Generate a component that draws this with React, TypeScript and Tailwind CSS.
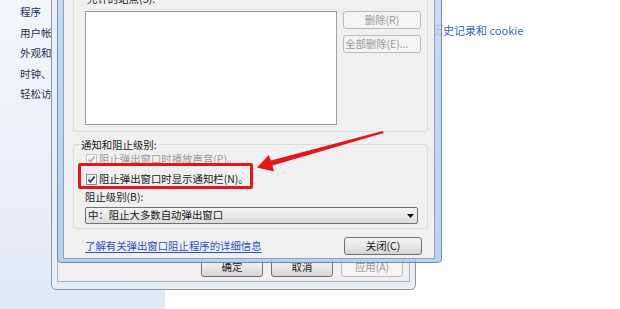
import React from "react";

// Win7 style push button
function WinButton({
  children,
  disabled,
  className = "",
}: {
  children: React.ReactNode;
  disabled?: boolean;
  className?: string;
}) {
  return (
    <div
      className={
        "flex items-center justify-center rounded-[3px] border text-[10.4px] leading-none " +
        (disabled
          ? "border-[#b8bcc0] bg-[#f4f4f4] text-[#9a9a9a] "
          : "border-[#707070] bg-linear-to-b from-[#f3f3f3] via-[#e8e8e8] to-[#d4d4d4] text-[#1a1a1a] ") +
        className
      }
    >
      {children}
    </div>
  );
}

function CheckBox({ disabled }: { disabled?: boolean }) {
  return (
    <svg width="11" height="11" viewBox="0 0 11 11" className="shrink-0">
      <defs>
        <linearGradient id={disabled ? "cbd" : "cbn"} x1="0" y1="0" x2="1" y2="1">
          <stop offset="0" stopColor={disabled ? "#f0f0f0" : "#dcdcdc"} />
          <stop offset="1" stopColor={disabled ? "#fafafa" : "#ffffff"} />
        </linearGradient>
      </defs>
      <rect x="0.5" y="0.5" width="10" height="10" fill="#fff" stroke={disabled ? "#c4c4c4" : "#8e8f8f"} />
      <rect x="1.5" y="1.5" width="8" height="8" fill={`url(#${disabled ? "cbd" : "cbn"})`} />
      <path
        d="M2.4 5.6 L4.4 7.9 L8.6 2.6"
        stroke={disabled ? "#b5b5b5" : "#1e3f9a"}
        strokeWidth="1.7"
        fill="none"
      />
    </svg>
  );
}

const sidebarItems = ["程序", "用户帐户", "外观和个性化", "时钟、语言和区域", "轻松访问"];

export default function App() {
  return (
    <div className="relative flex h-[309px] w-[620px] overflow-hidden bg-white font-['Noto_Sans_CJK_SC','Noto_Sans',sans-serif] text-[#1a1a1a]">
      {/* Control panel behind */}
      <div className="flex h-full w-[165px] shrink-0 flex-col bg-linear-to-b from-[#f2f6fc] via-[#eaf1fa] to-[#dfe9f7] pl-[20px] pt-[2px]">
        {sidebarItems.map((t) => (
          <div key={t} className="whitespace-nowrap text-[10.5px] leading-[20.5px] text-[#1d2f56]">
            {t}
          </div>
        ))}
      </div>
      <div className="flex-1 pl-[267px] pt-[22px]">
        <div className="whitespace-nowrap text-[11px] leading-[16px] text-[#3a62d0]">历史记录和 cookie</div>
      </div>

      {/* Internet Options (parent window, inactive) */}
      <div className="absolute left-[51px] top-[-30px] flex h-[320px] w-[365px] flex-col rounded-b-[5px] border border-[#8d969f] bg-[#e9eff6] px-[5px] pb-[7px]">
        <div className="flex flex-1 flex-col justify-end border border-[#a9b3bd] bg-[#f0f0f0]">
          <div className="flex justify-end gap-[8px] pb-[4px] pr-[6px]">
            <WinButton className="h-[19px] w-[62px]">确定</WinButton>
            <WinButton className="h-[19px] w-[62px]">取消</WinButton>
            <WinButton disabled className="h-[19px] w-[62px]">
              应用(A)
            </WinButton>
          </div>
        </div>
      </div>

      {/* Pop-up blocker settings (front dialog, glass frame) */}
      <div className="absolute left-[57px] top-[-40px] flex h-[303px] w-[385px] flex-col rounded-b-[4px] border border-[#6f8db2] bg-linear-to-b from-[#bcd6f2]/80 to-[#a9c8ea]/80 pb-[3px] pl-[5px] pr-[6px]">
        <div className="flex flex-1 flex-col border border-[#8ea3bb] bg-[#f0f0f0] pl-[9px] pr-[6px] pt-[14px]">
          {/* Exceptions group */}
          <div className="flex flex-col rounded-[3px] border border-[#d5dfe5] pb-[6px] pl-[11px] pt-[15px]">
            <div className="ml-[2px] text-[10.4px] leading-[13px]">允许的站点(S):</div>
            <div className="mt-[6px] flex">
              <div className="h-[114px] w-[252px] border border-[#9a9ea6] bg-white" />
              <div className="ml-[6px] flex flex-col gap-[6px]">
                <WinButton disabled className="h-[18px] w-[78px]">
                  删除(R)
                </WinButton>
                <WinButton disabled className="h-[18px] w-[78px] justify-start pl-[1px]">
                  全部删除(E)...
                </WinButton>
              </div>
            </div>
          </div>

          {/* Notification group */}
          <fieldset className="mt-[6px] rounded-[3px] border border-[#d5dfe5]">
            <legend className="ml-[6px] px-[1px] text-[10.4px] leading-[13px]">通知和阻止级别:</legend>
            <div className="flex flex-col pb-[4px] pl-[12px] pt-[1px]">
              <div className="flex h-[14px] items-center gap-[2px] text-[10.4px] text-[#9a9a9a]">
                <CheckBox disabled />
                <span>阻止弹出窗口时播放声音(P)。</span>
              </div>
              <div className="mt-[6px] flex h-[14px] items-center gap-[2px] text-[10.4px]">
                <CheckBox />
                <span>阻止弹出窗口时显示通知栏(N)。</span>
              </div>
              <div className="ml-[-1px] mt-[4px] h-[14px] text-[10.4px] leading-[14px]">阻止级别(B):</div>
              <div className="ml-[-1px] mt-[3px] flex h-[17px] w-[333px] items-center justify-between rounded-[2px] border border-[#707070] bg-linear-to-b from-[#f4f4f4] to-[#dddddd] pl-[2px] pr-[3px]">
                <span className="text-[10.4px] leading-none">中：阻止大多数自动弹出窗口</span>
                <svg width="7" height="4" viewBox="0 0 7 4">
                  <path d="M0 0 H7 L3.5 4 Z" fill="#111" />
                </svg>
              </div>
            </div>
          </fieldset>

          <div className="mr-[6px] mt-[8px] flex h-[18px] items-center justify-between">
            <span className="ml-[12px] text-[10.4px] leading-none text-[#2a52cc] underline underline-offset-2">
              了解有关弹出窗口阻止程序的详细信息
            </span>
            <WinButton className="h-[18px] w-[78px]">关闭(C)</WinButton>
          </div>
        </div>
      </div>

      {/* Red annotation */}
      <div className="absolute left-[78px] top-[163px] h-[26px] w-[175px] rounded-[2px] border-[3px] border-[#e8141b]" />
      <svg className="absolute left-0 top-0" width="620" height="309" viewBox="0 0 620 309">
        <polygon
          points="383.6,133 272.4,165.6 274,171.5 257,167.5 268.8,155 270.9,160.4 382.6,131"
          fill="#e8141b"
        />
      </svg>
    </div>
  );
}
